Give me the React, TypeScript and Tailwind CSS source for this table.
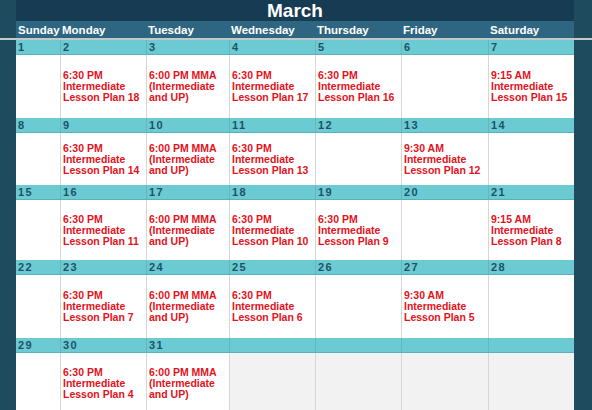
const COLS = 'grid grid-cols-[44px_86px_83px_86px_86px_87px_86px]';

const DAYS = ['Sunday', 'Monday', 'Tuesday', 'Wednesday', 'Thursday', 'Friday', 'Saturday'];

const MMA = ['6:00 PM MMA', '(Intermediate', 'and UP)'];
const pm = (n: number) => ['6:30 PM', 'Intermediate', `Lesson Plan ${n}`];
const am = (t: string, n: number) => [t, 'Intermediate', `Lesson Plan ${n}`];

type Day = { date?: number; event?: string[] };

const weeks: { h: string; days: Day[] }[] = [
  {
    h: 'h-[63px]',
    days: [
      { date: 1 },
      { date: 2, event: pm(18) },
      { date: 3, event: MMA },
      { date: 4, event: pm(17) },
      { date: 5, event: pm(16) },
      { date: 6 },
      { date: 7, event: am('9:15 AM', 15) },
    ],
  },
  {
    h: 'h-[52px]',
    days: [
      { date: 8 },
      { date: 9, event: pm(14) },
      { date: 10, event: MMA },
      { date: 11, event: pm(13) },
      { date: 12 },
      { date: 13, event: am('9:30 AM', 12) },
      { date: 14 },
    ],
  },
  {
    h: 'h-[60px]',
    days: [
      { date: 15 },
      { date: 16, event: pm(11) },
      { date: 17, event: MMA },
      { date: 18, event: pm(10) },
      { date: 19, event: pm(9) },
      { date: 20 },
      { date: 21, event: am('9:15 AM', 8) },
    ],
  },
  {
    h: 'h-[63px]',
    days: [
      { date: 22 },
      { date: 23, event: pm(7) },
      { date: 24, event: MMA },
      { date: 25, event: pm(6) },
      { date: 26 },
      { date: 27, event: am('9:30 AM', 5) },
      { date: 28 },
    ],
  },
  {
    h: 'h-[60px]',
    days: [
      { date: 29 },
      { date: 30, event: pm(4) },
      { date: 31, event: MMA },
      {},
      {},
      {},
      {},
    ],
  },
];

function Week({ h, days }: { h: string; days: Day[] }) {
  return (
    <div>
      {/* date bar */}
      <div className={`${COLS} h-[15px] bg-[#6ccad3] border-b border-[#58b1bb]`}>
        {days.map((d, i) => (
          <div
            key={i}
            className={`pl-[2px] text-[11px] leading-[14px] font-bold tracking-[1.5px] text-[#1d5266] ${
              i > 0 ? 'border-l border-[#5fb8c2]' : ''
            }`}
          >
            {d.date ?? ''}
          </div>
        ))}
      </div>
      {/* content */}
      <div className={`${COLS} ${h}`}>
        {days.map((d, i) => (
          <div
            key={i}
            className={`flex flex-col justify-center pl-[2px] ${
              d.date ? 'bg-white' : 'bg-[#f2f2f2]'
            } ${i > 0 ? 'border-l border-[#d6d6d6]' : ''}`}
          >
            {d.event?.map((line) => (
              <div key={line} className="text-[10.5px] leading-[11px] font-bold text-[#e4121b] whitespace-nowrap">
                {line}
              </div>
            ))}
          </div>
        ))}
      </div>
    </div>
  );
}

export default function App() {
  return (
    <div className="w-[592px] h-[410px] overflow-hidden bg-[#1f4b5e] font-['Liberation_Sans',Arial,sans-serif]">
      {/* title + weekday header */}
      <div className="flex">
        <div className="w-[16px] shrink-0" />
        <div className="w-[558px]">
          <div className="h-[21px] bg-[#163b52] text-center text-white font-bold text-[19px] leading-[22px]">
            March
          </div>
          <div className={`${COLS} h-[17px] bg-[#2e6681]`}>
            {DAYS.map((d) => (
              <div key={d} className="pl-[2px] text-white font-bold text-[11.5px] leading-[18px] whitespace-nowrap">
                {d}
              </div>
            ))}
          </div>
        </div>
      </div>
      <div className="h-[2px] bg-[#c4c8ca]" />
      {/* weeks */}
      <div className="flex">
        <div className="w-[16px] shrink-0" />
        <div className="w-[558px]">
          {weeks.map((w, i) => (
            <Week key={i} h={w.h} days={w.days} />
          ))}
        </div>
      </div>
    </div>
  );
}
